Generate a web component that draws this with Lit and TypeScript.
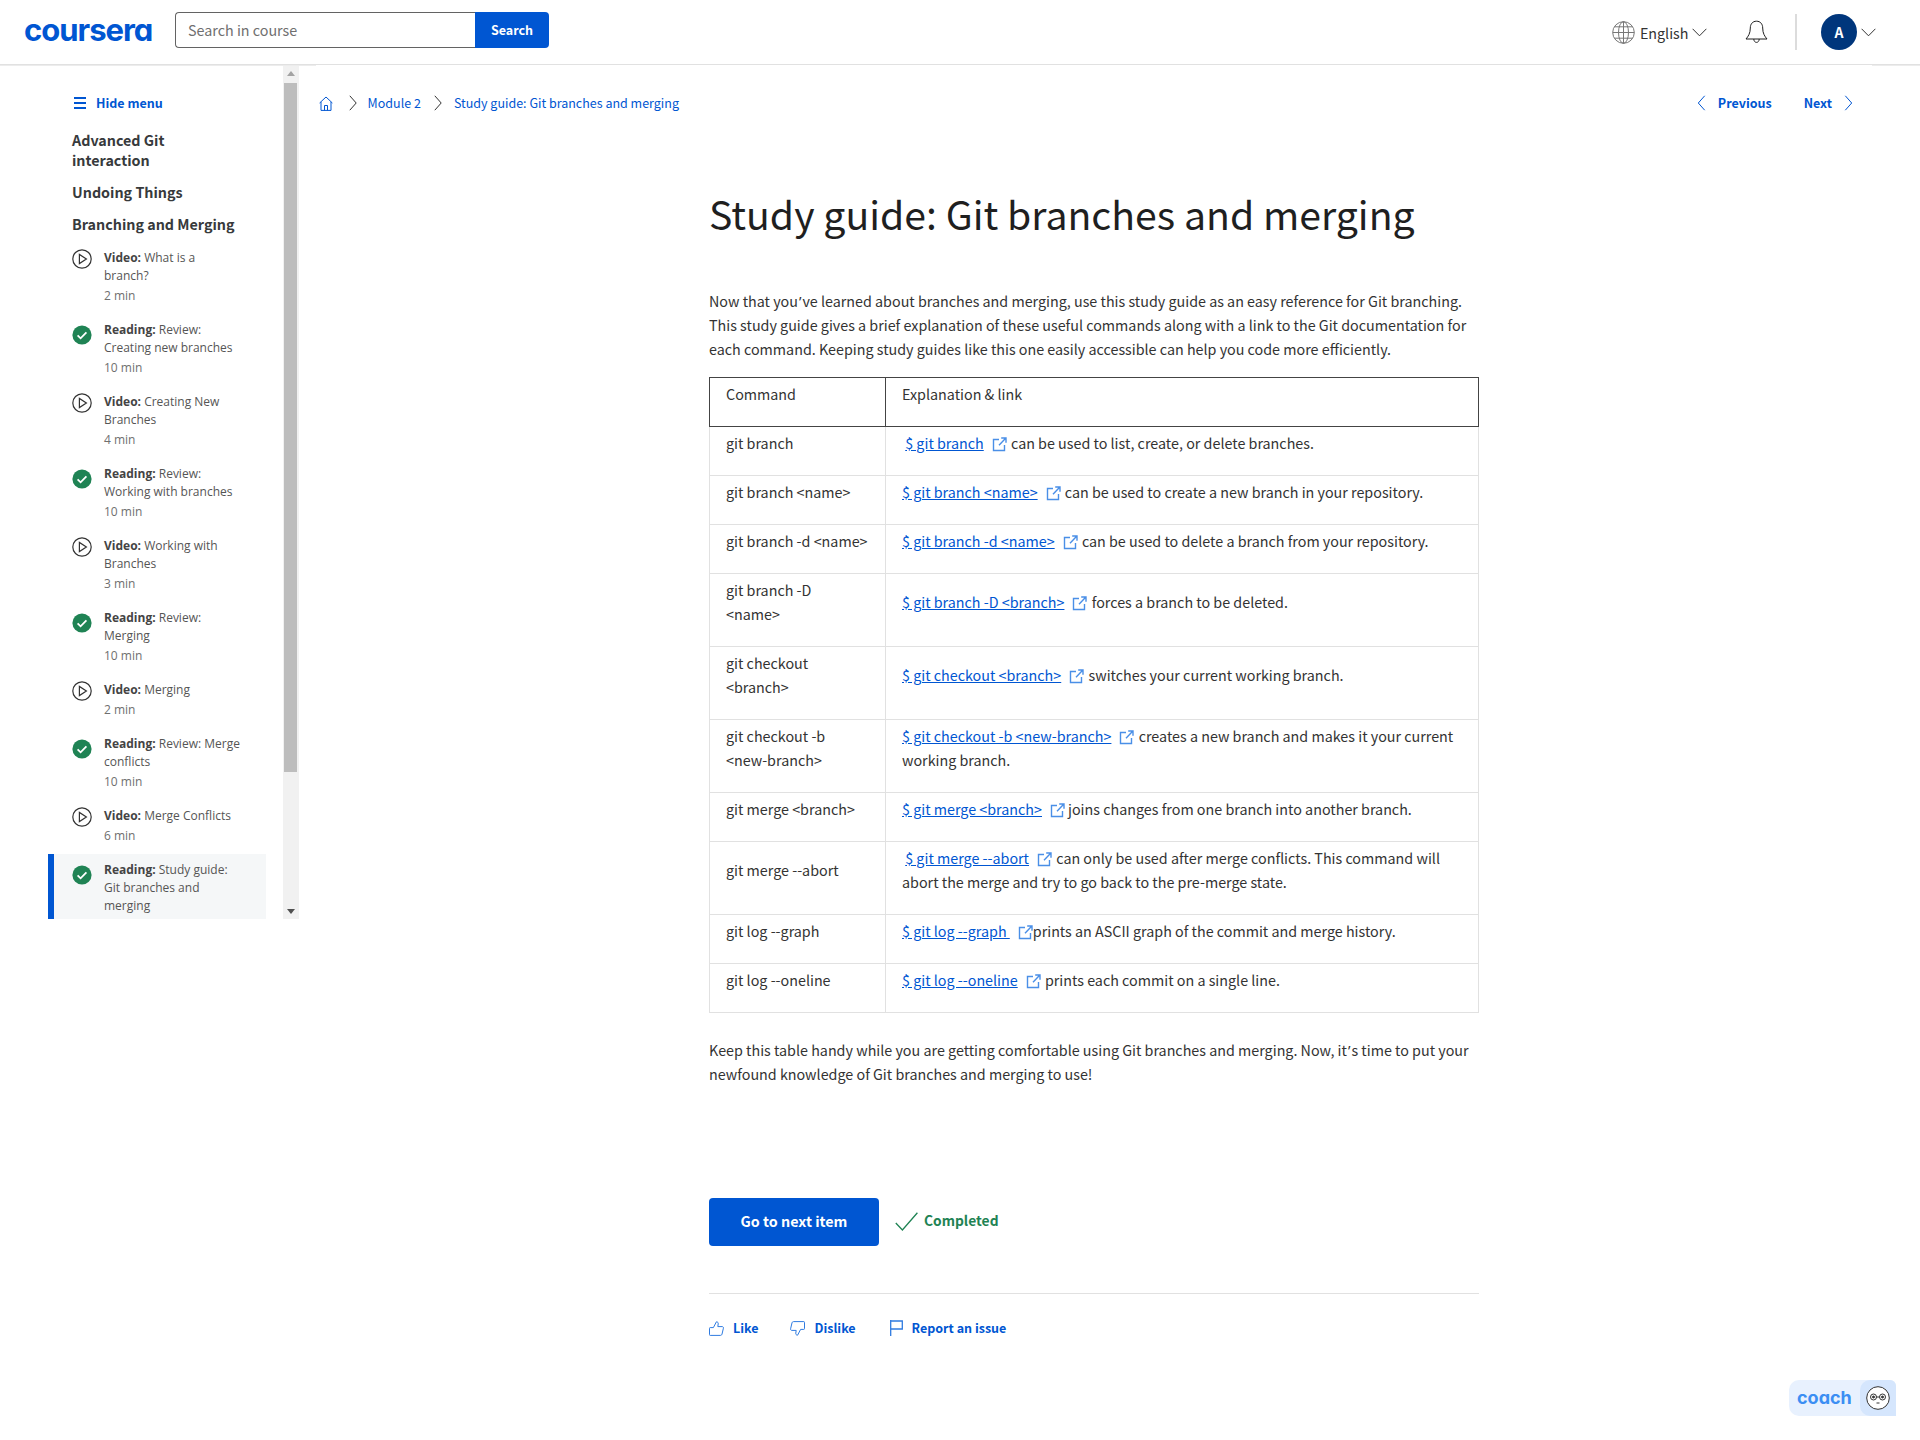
import { LitElement, html, css, svg } from 'lit';
import { customElement } from 'lit/decorators.js';

const icon = (w: number, h: number, vb: string, body: unknown, cls = '') => html`<svg class=${cls} width=${w} height=${h} viewBox=${vb} fill="none" stroke="currentColor" stroke-width="1">${body}</svg>`;

const chevronRight = (w = 8, h = 16) => icon(w, h, '0 0 8 16', svg`<path d="M.8.8 7.2 8 .8 15.2"/>`);
const chevronLeft = (w = 9, h = 16) => icon(w, h, '0 0 8 16', svg`<path d="M7.2.8.8 8l6.4 7.2"/>`);
const chevronDown = () => icon(15, 9, '0 0 15 9', svg`<path d="M.6.8 7.5 7.8 14.4.8"/>`);

const playIcon = () => icon(20, 20, '0 0 20 20', svg`<circle cx="10" cy="10" r="9.2" stroke-width="1.2"/><path d="M7.4 5.4v9.2l7-4.6z" stroke-width="1.2"/>`, 'item-icon');
const doneIcon = () => html`<svg class="item-icon done" width="20" height="20" viewBox="0 0 20 20"><circle cx="10" cy="10" r="9.6" fill="#1f8354"/><path d="M5.6 10.3l3 3 5.8-6" fill="none" stroke="#fff" stroke-width="1.8"/></svg>`;
const extIcon = () => icon(15, 15, '0 0 15 15', svg`<path d="M7 2.500H1.500v11h11V8" stroke-width="1.400"/><path d="M7 8.200 13.400 1.600M9.200 1h4.800v4.800" stroke-width="1.400"/>`, 'ext');
const apos = html`<span class="apos">’</span>`;

interface Item { kind: string; title: string; time?: string; done?: boolean; active?: boolean }

const items: Item[] = [
  { kind: 'Video', title: 'What is a branch?', time: '2 min' },
  { kind: 'Reading', title: 'Review: Creating new branches', time: '10 min', done: true },
  { kind: 'Video', title: 'Creating New Branches', time: '4 min' },
  { kind: 'Reading', title: 'Review: Working with branches', time: '10 min', done: true },
  { kind: 'Video', title: 'Working with Branches', time: '3 min' },
  { kind: 'Reading', title: 'Review: Merging', time: '10 min', done: true },
  { kind: 'Video', title: 'Merging', time: '2 min' },
  { kind: 'Reading', title: 'Review: Merge conflicts', time: '10 min', done: true },
  { kind: 'Video', title: 'Merge Conflicts', time: '6 min' },
  { kind: 'Reading', title: 'Study guide: Git branches and merging', done: true, active: true },
];

const rows = [
  { cmd: 'git branch', lead: true, link: '$ git branch', text: 'can be used to list, create, or delete branches.' },
  { cmd: 'git branch <name>', link: '$ git branch <name>', text: 'can be used to create a new branch in your repository.' },
  { cmd: 'git branch -d <name>', link: '$ git branch -d <name>', text: 'can be used to delete a branch from your repository.' },
  { cmd: 'git branch -D\n<name>', link: '$ git branch -D <branch>', text: 'forces a branch to be deleted.' },
  { cmd: 'git checkout <branch>', link: '$ git checkout <branch>', text: 'switches your current working branch.' },
  { cmd: 'git checkout -b <new-branch>', link: '$ git checkout -b <new-branch>', text: 'creates a new branch and makes it your current working branch.' },
  { cmd: 'git merge <branch>', link: '$ git merge <branch>', text: 'joins changes from one branch into another branch.', gap: 'snug' },
  { cmd: 'git merge --abort', lead: true, link: '$ git merge --abort', text: 'can only be used after merge conflicts. This command will abort the merge and try to go back to the pre-merge state.' },
  { cmd: 'git log --graph', link: '$ git log --graph\u00a0', text: 'prints an ASCII graph of the commit and merge history.', gap: 'tight' },
  { cmd: 'git log --oneline', link: '$ git log --oneline', text: 'prints each commit on a single line.' },
];

@customElement('app-root')
export class AppRoot extends LitElement {
  static styles = css`
    :host {
      display: block;
      position: relative;
      min-height: 1440px;
      background: #fff;
      color: #1f1f1f;
      font-family: "Noto Sans CJK SC", "Noto Sans", sans-serif;
      font-size: 14.32px;
      line-height: 24px;
    }
    a { color: #0056d2; text-decoration: none; }
    svg { display: block; flex: none; }
    .apos { padding: 0 1px; font-family: "Noto Sans", sans-serif; font-size: 14px; line-height: 0; }

    .header {
      display: flex;
      align-items: center;
      height: 64px;
      padding: 0 44px 0 24px;
      border-bottom: 1px solid #e1e1e1;
      box-sizing: content-box;
    }
    .logo {
      width: 151px;
      margin-bottom: 4px;
      font-family: "Inter", sans-serif;
      font-feature-settings: "cv11";
      font-size: 31px;
      font-weight: 700;
      line-height: 36px;
      letter-spacing: -1px;
      color: #0056d2;
    }
    .search { display: flex; height: 36px; margin-bottom: 4px; }
    .search-box {
      width: 300px;
      box-sizing: border-box;
      padding: 0 12px;
      border: 1px solid #636363;
      border-right: none;
      border-radius: 4px 0 0 4px;
      color: #6f6f6f;
      line-height: 33px;
    }
    .search-btn {
      width: 74px;
      background: #0056d2;
      color: #fff;
      border-radius: 0 4px 4px 0;
      text-align: center;
      font-size: 12.5px;
      font-weight: 600;
      line-height: 36px;
    }
    .spacer { flex: 1; }
    .lang { display: flex; align-items: center; gap: 5px; margin-top: 1px; color: #333; }
    .lang span { margin-right: -2px; }
    .globe { color: #777; }
    .bell { margin-left: 38.5px; color: #1f1f1f; }
    .divider { width: 2px; height: 36px; margin: 0 24px 0 27px; background: #dcdcdc; }
    .avatar {
      width: 36px;
      height: 36px;
      border-radius: 50%;
      background: #00367c;
      color: #fff;
      font-size: 14px;
      font-weight: 700;
      line-height: 37px;
      text-align: center;
    }
    .user { display: flex; align-items: center; gap: 4px; color: #333; }

    .body { position: relative; display: flex; align-items: flex-start; border-top: 1px solid #ececec; }
    .body::before { content: ""; position: absolute; left: 316px; top: -1px; width: 1556px; height: 1px; background: #fff; }

    .sidebar { display: flex; width: 300px; height: 853px; flex: none; }
    .side-col { width: 218px; margin: 0 17px 0 48px; overflow: hidden; }
    .hide { display: flex; align-items: center; gap: 10px; margin: 25px 0 15px 26px; font-size: 12.5px; font-weight: 600; line-height: 24px; }
    .side-head { margin: 0 0 12px 24px; width: 140px; font-size: 14.32px; font-weight: 600; line-height: 20px; color: #373a3c; }
    .side-head.wide { width: 180px; margin-bottom: 15px; }
    .item { display: flex; align-items: flex-start; gap: 12px; padding: 0 24px 16px 18px; margin-left: 6px; }
    .item.active { margin: -7px 0 0; padding: 7px 24px 4px 18px; border-left: 6px solid #0056d2; background: #f5f7f8; }
    .item-icon { color: #333; }
    .item-icon.done { margin-top: 4px; }
    .item-text { width: 140px; font-family: "Open Sans", sans-serif; font-size: 12px; line-height: 18px; color: #555; }
    .item-text b { font-weight: 700; color: #444; }
    .item-time { margin-top: 2px; color: #6f6f6f; }

    .scrollbar { position: relative; width: 16px; height: 100%; background: #f1f1f1; }
    .thumb { position: absolute; top: 17px; left: 1px; width: 13px; height: 689px; background: #bdbdbd; }
    .arrow { position: absolute; left: 4px; width: 0; height: 0; border: 4px solid transparent; }
    .arrow.up { top: 5px; border-top: none; border-bottom: 5px solid #a3a3a3; }
    .arrow.down { bottom: 5px; border-bottom: none; border-top: 5px solid #505050; }

    .main { flex: 1; min-width: 0; }
    .topnav { display: flex; align-items: center; height: 24px; margin-top: 25px; padding: 0 67px 0 19px; font-size: 12.5px; }
    .crumbs { display: flex; align-items: center; }
    .crumbs svg { color: #333; }
    .crumbs .home { color: #0056d2; margin-right: 16px; }
    .crumbs a { margin: 0 12px; }
    .crumbs a.module { margin: 0 13px 0 10.6px; }
    .pager { display: flex; align-items: center; font-weight: 600; color: #0056d2; }
    .pager a { display: flex; align-items: center; gap: 12px; }
    .pager a + a { margin-left: 32px; }

    .content { width: 770px; margin-left: 409px; }
    h1 { margin: 70px 0 0; font-size: 39.2px; font-weight: 400; line-height: 56px; color: #1f1f1f; }
    p { margin: 0; }
    .intro { margin: 48px 0 16px; color: #333; }
    table { width: 770px; border-collapse: collapse; table-layout: fixed; color: #333; }
    td, th {
      padding: 4px 16px 20px;
      border: 1px solid #e1e1e1;
      font-weight: 400;
      text-align: left;
      vertical-align: middle;
      white-space: pre-line;
    }
    th { border-color: #444; vertical-align: top; }
    .col-cmd { width: 176px; }
    td a { text-decoration: underline; }
    .ext { display: inline-block; margin: 0 1px 2px 8px; vertical-align: middle; color: #4a8fe7; }
    .tight .ext { margin-right: 0; }
    .snug .ext { margin-right: 3px; }
    .outro { margin-top: 25px; color: #333; }
    .finish { display: flex; align-items: center; margin-top: 112px; }
    .next-btn {
      width: 170px;
      height: 48px;
      background: #0056d2;
      color: #fff;
      border-radius: 4px;
      font-weight: 600;
      line-height: 46px;
      text-align: center;
    }
    .completed { display: flex; align-items: center; gap: 6px; margin-left: 16px; margin-top: -4px; font-size: 13.8px; color: #1f8354; font-weight: 600; }
    .completed svg { margin-top: 3px; }
    .rule { height: 1px; margin-top: 47px; background: #e1e1e1; }
    .actions { display: flex; align-items: center; margin-top: 22px; font-size: 12.5px; font-weight: 600; color: #0056d2; }
    .actions a { display: flex; align-items: center; gap: 9px; margin-right: 33px; }
    .actions a.like { margin-right: 32px; }
    .actions a.dislike { margin-right: 34px; }
    .actions svg { color: #2f7be0; }

    .coach {
      position: absolute;
      left: 1789px;
      top: 1380px;
      display: flex;
      align-items: center;
      width: 107px;
      height: 36px;
      background: #e8f1fe;
      border-radius: 10px 6px 0 10px;
      overflow: hidden;
    }
    .coach-label { width: 71px; padding-left: 8px; box-sizing: border-box; font-family: "Inter", sans-serif; font-feature-settings: "cv11"; font-size: 18px; font-weight: 700; color: #3b8ef3; }
    .coach-face { display: flex; align-items: center; justify-content: center; width: 36px; height: 36px; background: #d5e6fd; border-radius: 10px 0 0 10px; }
  `;

  private renderItem(i: Item) {
    return html`<div class="item ${i.active ? 'active' : ''}">
      ${i.done ? doneIcon() : playIcon()}
      <div class="item-text">
        <div><b>${i.kind}:</b> ${i.title}</div>
        ${i.time ? html`<div class="item-time">${i.time}</div>` : ''}
      </div>
    </div>`;
  }

  private renderHeader() {
    return html`<div class="header">
      <div class="logo">coursera</div>
      <div class="search">
        <div class="search-box">Search in course</div>
        <div class="search-btn">Search</div>
      </div>
      <div class="spacer"></div>
      <div class="lang">
        ${icon(23, 23, '0 0 23 23', svg`<circle cx="11.5" cy="11.5" r="10.8"/><ellipse cx="11.5" cy="11.5" rx="5" ry="10.8"/><path d="M11.5.7v21.6M.7 11.5h21.6M2.4 5.8h18.2M2.4 17.2h18.2"/>`, 'globe')}
        <span>English</span>
        ${chevronDown()}
      </div>
      ${icon(23, 24, '0 0 23 24', svg`<path d="M11.5 1.2c-4 0-6.2 3-6.2 6.8 0 5.5-2 8.2-4.3 11h21c-2.3-2.8-4.3-5.5-4.3-11 0-3.8-2.2-6.8-6.2-6.8z"/><path d="M8.8 19c0 2 1.2 3.4 2.7 3.4s2.7-1.4 2.7-3.4"/>`, 'bell')}
      <div class="divider"></div>
      <div class="user">
        <div class="avatar">A</div>
        ${chevronDown()}
      </div>
    </div>`;
  }

  private renderSidebar() {
    return html`<div class="sidebar">
      <div class="side-col">
        <a class="hide" href="#">
          ${icon(12, 12, '0 0 12 12', svg`<path d="M0 1h12M0 6h12M0 11h12" stroke-width="2"/>`)}
          Hide menu
        </a>
        <div class="side-head">Advanced Git interaction</div>
        <div class="side-head">Undoing Things</div>
        <div class="side-head wide">Branching and Merging</div>
        ${items.map((i) => this.renderItem(i))}
      </div>
      <div class="scrollbar">
        <div class="arrow up"></div>
        <div class="thumb"></div>
        <div class="arrow down"></div>
      </div>
    </div>`;
  }

  private renderTable() {
    return html`<table>
      <colgroup><col class="col-cmd" /><col /></colgroup>
      <tr><th>Command</th><th>Explanation &amp; link</th></tr>
      ${rows.map((r) => html`<tr class=${r.gap ?? ''}>
        <td>${r.cmd}</td>
        <td>${r.lead ? '\u00a0' : ''}<a href="#">${r.link}</a>${extIcon()}${r.gap ? '' : ' '}${r.text}</td>
      </tr>`)}
    </table>`;
  }

  render() {
    return html`
      ${this.renderHeader()}
      <div class="body">
        ${this.renderSidebar()}
        <div class="main">
          <div class="topnav">
            <div class="crumbs">
              ${icon(14, 15, '0 0 14 15', svg`<path d="M.6 7 7 1l6.4 6M2 6v8.4h10V6M5.5 14.4V9.5h3v4.9"/>`, 'home')}
              ${chevronRight()}
              <a class="module" href="#">Module 2</a>
              ${chevronRight()}
              <a href="#">Study guide: Git branches and merging</a>
            </div>
            <div class="spacer"></div>
            <div class="pager">
              <a href="#">${chevronLeft()}Previous</a>
              <a href="#">Next${chevronRight(9, 16)}</a>
            </div>
          </div>
          <div class="content">
            <h1>Study guide: Git branches and merging</h1>
            <p class="intro">Now that you${apos}ve learned about branches and merging, use this study guide as an easy reference for Git branching. This study guide gives a brief explanation of these useful commands along with a link to the Git documentation for each command. Keeping study guides like this one easily accessible can help you code more efficiently.</p>
            ${this.renderTable()}
            <p class="outro">Keep this table handy while you are getting comfortable using Git branches and merging. Now, it${apos}s time to put your newfound knowledge of Git branches and merging to use!</p>
            <div class="finish">
              <div class="next-btn">Go to next item</div>
              <div class="completed">
                ${icon(23, 19, '0 0 23 19', svg`<path d="M.8 11l6.6 7L22.4.8" stroke-width="1.3"/>`)}
                Completed
              </div>
            </div>
            <div class="rule"></div>
            <div class="actions">
              <a class="like" href="#">${icon(15, 15, '0 0 15 15', svg`<path d="M4.4 6.6 7.4.8c1.4 0 2 1 1.8 2.2L8.8 5.6h4.4c1 0 1.4.8 1.2 1.6l-1.4 6c-.2.8-.8 1.2-1.6 1.2H1.2a.7.7 0 0 1-.7-.7V7.3a.7.7 0 0 1 .7-.7z"/>`)}Like</a>
              <a class="dislike" href="#">${icon(15, 15, '0 0 15 15', svg`<path d="M10.6 8.4 7.6 14.2c-1.4 0-2-1-1.8-2.2l.4-2.6H1.800c-1 0-1.400-.8-1.200-1.600l1.400-6C2.200 1 2.800.6 3.600.6h10.200c.4 0 .7.300.7.700v6.400c0 .4-.3.700-.7.700z"/>`)}Dislike</a>
              <a href="#">${icon(13, 16, '0 0 13 16', svg`<path d="M.7 0v16M.7 1h11.600v8H.7" stroke-width="1.300"/>`)}Report an issue</a>
            </div>
          </div>
        </div>
      </div>
      <div class="coach">
        <div class="coach-label">coach</div>
        <div class="coach-face">
          <svg width="24" height="24" viewBox="0 0 24 24" fill="none" stroke="#333">
            <circle cx="12" cy="12" r="11.300" fill="#fff"/>
            <circle cx="7.500" cy="11" r="3"/><circle cx="16.500" cy="11" r="3"/>
            <path d="M10.500 11h3M10.500 17h3"/>
            <circle cx="7.500" cy="11" r="1" fill="#333"/><circle cx="16.500" cy="11" r="1" fill="#333"/>
          </svg>
        </div>
      </div>
    `;
  }
}
